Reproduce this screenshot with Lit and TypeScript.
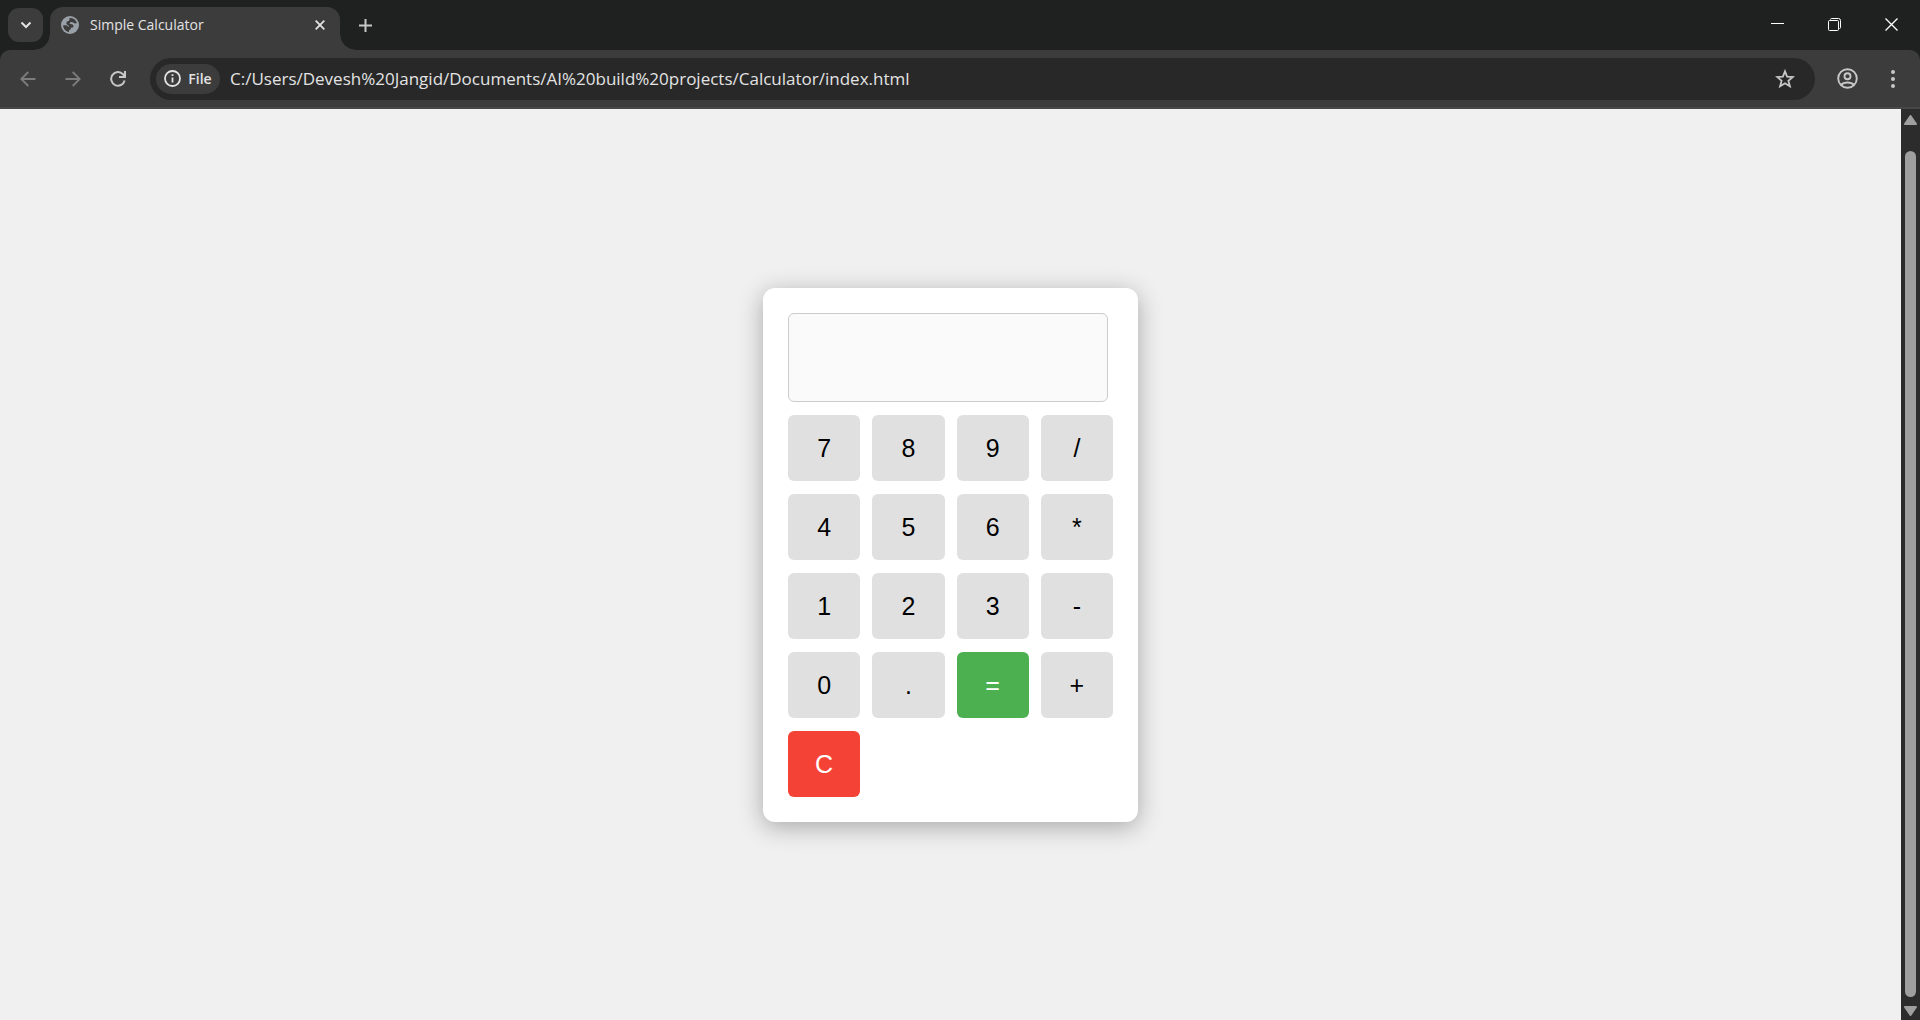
import { LitElement, html, css } from "lit";
import { customElement, state } from "lit/decorators.js";

@customElement("browser-tabs")
class BrowserTabs extends LitElement {
  static styles = css`
    :host {
      display: block;
      font-family: "Open Sans", "Noto Sans", sans-serif;
    }
    .strip {
      display: flex;
      align-items: flex-start;
      height: 50px;
      box-sizing: border-box;
      padding-left: 8px;
      background: #1f2120;
      color: #e3e3e3;
    }
    button {
      display: flex;
      align-items: center;
      justify-content: center;
      padding: 0;
      border: 0;
      background: none;
      color: inherit;
    }
    svg {
      display: block;
      flex: none;
    }
    .search {
      width: 35px;
      height: 34px;
      margin-top: 8px;
      border-radius: 11px;
      background: #3c3c3c;
    }
    .tab {
      position: relative;
      display: flex;
      align-items: center;
      box-sizing: border-box;
      width: 290px;
      height: 43px;
      margin: 7px 0 0 7px;
      padding: 0 10px 7px 11px;
      border-radius: 13px 13px 0 0;
      background: #3c3c3c;
    }
    .tab::before,
    .tab::after {
      content: "";
      position: absolute;
      bottom: 0;
      width: 15px;
      height: 15px;
    }
    .tab::before {
      right: 100%;
      background: radial-gradient(circle at 0 0, transparent 14px, #3c3c3c 15px);
    }
    .tab::after {
      left: 100%;
      background: radial-gradient(circle at 100% 0, transparent 14px, #3c3c3c 15px);
    }
    .title {
      flex: 1;
      margin-left: 11px;
      font-size: 14px;
      line-height: 20px;
      white-space: nowrap;
    }
    .close {
      width: 20px;
      height: 20px;
    }
    .new {
      width: 36px;
      height: 34px;
      margin: 8px 0 0 7px;
    }
    .window {
      display: flex;
      margin-left: auto;
    }
    .window button {
      width: 57px;
      height: 49px;
      color: #fff;
    }
  `;

  render() {
    return html`
      <div class="strip">
        <button class="search" aria-label="Search tabs">
          <svg width="12" height="8" viewBox="0 0 12 8" fill="none" stroke="currentColor" stroke-width="2">
            <path d="M1.5 1.5 6 6 10.5 1.5" />
          </svg>
        </button>
        <div class="tab">
          <svg width="18" height="18" viewBox="0 0 18 18">
            <circle cx="9" cy="9" r="9" fill="#9aa0a8" />
            <path
              d="M8.500 2.100C12 1.900 14.900 3.900 15.900 7C14.800 7.700 13.600 7.500 12.600 6.800C11.600 6 10.300 5.900 9.300 6.400C8.300 6.900 8.300 7.700 9.300 7.900L11 8.300C12.600 8.800 12.800 10.300 12 11.600L9.800 11.700L9.600 13.400L8 14.300L8 15.900C4.600 15.400 2.100 12.500 2.100 9.200L5.200 9.200C6.400 9.400 6.500 10.600 7.600 10.800C8.200 10.600 8 10 7.400 9.500L5.700 8.200C5.100 7.200 5.400 5.700 6.600 5.200L8.300 4.800Z"
              fill="#3c3c3c"
            />
          </svg>
          <span class="title">Simple Calculator</span>
          <button class="close" aria-label="Close tab">
            <svg width="10" height="10" viewBox="0 0 10 10" stroke="currentColor" stroke-width="1.800">
              <path d="M.7.7 9.300 9.300M9.300.7.7 9.300" />
            </svg>
          </button>
        </div>
        <button class="new" aria-label="New tab">
          <svg width="13" height="13" viewBox="0 0 13 13" stroke="#c7c7c7" stroke-width="2">
            <path d="M6.500 0V13M0 6.500H13" />
          </svg>
        </button>
        <div class="window">
          <button aria-label="Minimize">
            <svg width="13" height="13" viewBox="0 0 13 13" stroke="currentColor"><path d="M0 5.500H13" /></svg>
          </button>
          <button aria-label="Restore">
            <svg width="14" height="13" viewBox="0 0 14 13" fill="none" stroke="currentColor">
              <path d="M2.500 1.500Q2.500.5 3.500.5H10.500Q12.500.5 12.500 2.500V9.500Q12.500 10.500 11.500 10.500" />
              <rect x=".5" y="2.500" width="10" height="10" rx="1" />
            </svg>
          </button>
          <button aria-label="Close window">
            <svg width="13" height="13" viewBox="0 0 13 13" stroke="currentColor" stroke-width="1.300">
              <path d="M.5.5 12.500 12.500M12.500.5.5 12.500" />
            </svg>
          </button>
        </div>
      </div>
    `;
  }
}

@customElement("browser-toolbar")
class BrowserToolbar extends LitElement {
  static styles = css`
    :host {
      display: block;
      background: #1f2120;
      font-family: "Open Sans", "Noto Sans", sans-serif;
    }
    .bar {
      display: flex;
      align-items: center;
      box-sizing: border-box;
      height: 59px;
      padding: 0 5px;
      border-bottom: 2px solid #484848;
      border-radius: 10px 10px 0 0;
      background: #3c3c3c;
      color: #c7c7c7;
    }
    button {
      display: flex;
      align-items: center;
      justify-content: center;
      flex: none;
      width: 45px;
      height: 42px;
      padding: 0;
      border: 0;
      background: none;
      color: inherit;
    }
    button:disabled {
      color: #7c7c7c;
    }
    svg {
      display: block;
      flex: none;
    }
    .address {
      display: flex;
      align-items: center;
      flex: 1;
      height: 42px;
      margin: 0 10px;
      padding-left: 6px;
      border-radius: 21px;
      background: #282828;
    }
    .address .chip {
      width: 64px;
      height: 30px;
      gap: 7px;
      border-radius: 15px;
      background: #3c3c3c;
      color: #e3e3e3;
      font: 600 14px/20px "Open Sans", "Noto Sans", sans-serif;
    }
    .address input {
      flex: 1;
      min-width: 0;
      padding: 0;
      margin-left: 10px;
      border: 0;
      outline: 0;
      background: none;
      color: #e3e3e3;
      font: 17px/24px "Open Sans", "Noto Sans", sans-serif;
    }
    .address .star {
      width: 60px;
    }
  `;

  render() {
    return html`
      <div class="bar">
        <button disabled aria-label="Back">
          <svg width="16" height="16" viewBox="0 0 16 16" fill="none" stroke="currentColor" stroke-width="1.800">
            <path d="M15.500 8H1.500M8.300 1 1.300 8 8.300 15" />
          </svg>
        </button>
        <button disabled aria-label="Forward">
          <svg width="16" height="16" viewBox="0 0 16 16" fill="none" stroke="currentColor" stroke-width="1.800">
            <path d="M.5 8H14.500M7.700 1 14.700 8 7.700 15" />
          </svg>
        </button>
        <button aria-label="Reload">
          <svg width="16" height="16" viewBox="0 0 16 16" fill="none" stroke="currentColor" stroke-width="2">
            <path d="M14.600 9.500A6.800 6.800 0 1 1 13 3.300L14.500 5M15 0V6H9" />
          </svg>
        </button>
        <div class="address">
          <button class="chip">
            <svg width="17" height="17" viewBox="0 0 17 17" fill="none" stroke="currentColor" stroke-width="1.800">
              <circle cx="8.500" cy="8.500" r="7.500" />
              <path d="M8.500 7.500V12.500M8.500 4.300V6" />
            </svg>
            File
          </button>
          <input
            aria-label="Address"
            spellcheck="false"
            .value=${"C:/Users/Devesh%20Jangid/Documents/AI%20build%20projects/Calculator/index.html"}
          />
          <button class="star" aria-label="Bookmark this tab">
            <svg width="20" height="20" viewBox="0 0 20 20" fill="none" stroke="currentColor" stroke-width="1.800">
              <path d="M10 2.300 12.100 7.600 17.800 8 13.400 11.700 14.900 17.300 10 14.200 5.100 17.300 6.600 11.700 2.200 8 7.900 7.600Z" />
            </svg>
          </button>
        </div>
        <button aria-label="Profile">
          <svg width="21" height="21" viewBox="0 0 21 21" fill="none" stroke="currentColor" stroke-width="1.900">
            <circle cx="10.500" cy="10.500" r="9.300" />
            <circle cx="10.500" cy="8.300" r="3" />
            <path d="M4 17C7 13.600 14 13.600 17 17" />
          </svg>
        </button>
        <button aria-label="Menu">
          <svg width="4" height="18" viewBox="0 0 4 18" fill="currentColor">
            <circle cx="2" cy="2" r="2" />
            <circle cx="2" cy="9" r="2" />
            <circle cx="2" cy="16" r="2" />
          </svg>
        </button>
      </div>
    `;
  }
}

@customElement("simple-calculator")
class SimpleCalculator extends LitElement {
  static styles = css`
    :host {
      display: block;
      font-family: Arial, "Liberation Sans", sans-serif;
    }
    .card {
      display: grid;
      gap: 13px;
      box-sizing: border-box;
      width: 375px;
      padding: 25px;
      border-radius: 12px;
      background: #fff;
      box-shadow: 0 5px 25px rgba(0, 0, 0, 0.3);
    }
    .display {
      box-sizing: border-box;
      width: 320px;
      height: 89px;
      padding: 12px;
      border: 1px solid #ccc;
      border-radius: 6px;
      outline: 0;
      background: #fafafa;
      font: 30px "Liberation Sans", sans-serif;
      text-align: right;
    }
    .keys {
      display: grid;
      grid-template-columns: repeat(4, 1fr);
      gap: 13px 12px;
    }
    .key {
      height: 66px;
      padding: 0;
      border: 0;
      border-radius: 6px;
      background: #e0e0e0;
      color: #000;
      font: 25px "Liberation Sans", sans-serif;
      cursor: pointer;
    }
    .equals {
      background: #4caf50;
      color: #fff;
    }
    .clear {
      background: #f44336;
      color: #fff;
    }
  `;

  @state() private entry = "";

  private keys = "789/456*123-0.=+C".split("");

  private evaluate(text: string): string {
    const parts = text.match(/\d*\.?\d+|[-+*/]/g) ?? [];
    const terms: number[] = [];
    let op = "+";
    for (const part of parts) {
      if ("+-*/".includes(part)) {
        op = part;
        continue;
      }
      const n = Number(part);
      if (op === "+") terms.push(n);
      else if (op === "-") terms.push(-n);
      else {
        const last = terms.pop() ?? 0;
        terms.push(op === "*" ? last * n : last / n);
      }
    }
    return parts.length ? String(terms.reduce((a, b) => a + b, 0)) : "";
  }

  private press(key: string) {
    if (key === "C") this.entry = "";
    else if (key === "=") this.entry = this.evaluate(this.entry);
    else this.entry += key;
  }

  render() {
    return html`
      <div class="card">
        <input class="display" aria-label="Result" readonly .value=${this.entry} />
        <div class="keys">
          ${this.keys.map(
            (key) => html`<button
              class="key ${key === "=" ? "equals" : key === "C" ? "clear" : ""}"
              @click=${() => this.press(key)}
            >${key}</button>`
          )}
        </div>
      </div>
    `;
  }
}

@customElement("app-root")
class AppRoot extends LitElement {
  static styles = css`
    :host {
      display: flex;
      flex-direction: column;
      min-height: 100vh;
    }
    .view {
      display: flex;
      flex: 1;
    }
    .page {
      display: flex;
      flex: 1;
      align-items: center;
      justify-content: center;
      padding-bottom: 19px;
      background: #f0f0f0;
    }
    .scrollbar {
      display: flex;
      flex-direction: column;
      align-items: center;
      box-sizing: border-box;
      width: 19px;
      padding: 6px 0 4px;
      background: #2c2c2c;
    }
    .thumb {
      flex: 1;
      width: 11px;
      margin: 26px 0 9px;
      border-radius: 6px;
      background: #9f9f9f;
    }
    svg {
      display: block;
    }
  `;

  render() {
    return html`
      <browser-tabs></browser-tabs>
      <browser-toolbar></browser-toolbar>
      <div class="view">
        <main class="page"><simple-calculator></simple-calculator></main>
        <div class="scrollbar">
          <svg width="13" height="10" viewBox="0 0 13 10" fill="#9f9f9f" stroke="#9f9f9f" stroke-width="2" stroke-linejoin="round">
            <path d="M6.500 1 12 9H1Z" />
          </svg>
          <div class="thumb"></div>
          <svg width="13" height="10" viewBox="0 0 13 10" fill="#9f9f9f" stroke="#9f9f9f" stroke-width="2" stroke-linejoin="round">
            <path d="M6.500 9 12 1H1Z" />
          </svg>
        </div>
      </div>
    `;
  }
}
